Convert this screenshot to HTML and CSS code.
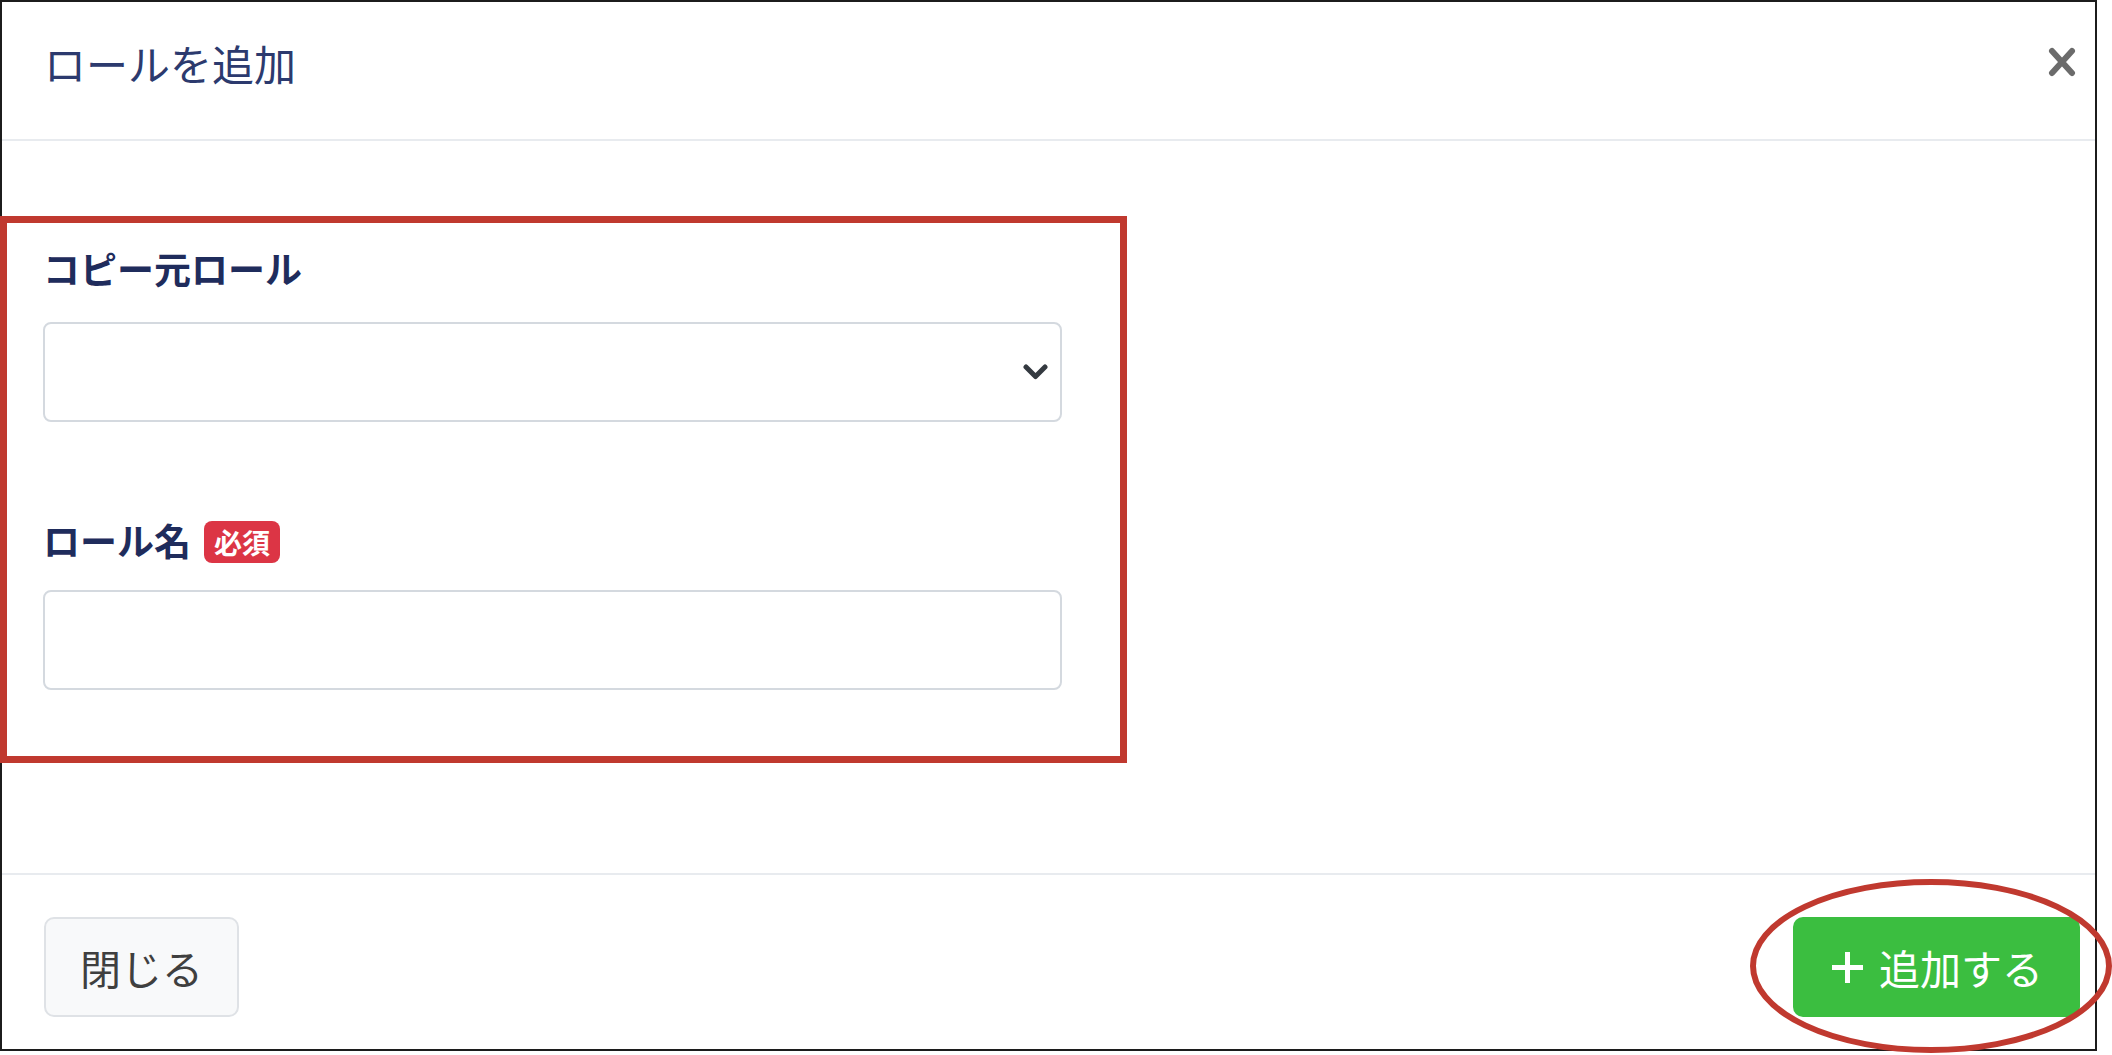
FILE: index.html
```html
<!DOCTYPE html>
<html lang="ja">
<head>
<meta charset="utf-8">
<title>ロールを追加</title>
<link rel="stylesheet" href="styles.css">
</head>
<body>
<div class="page">
  <div class="modal">
    <div class="modal-header">
      <h5 class="modal-title">ロールを追加</h5>
      <button class="close-btn" type="button" aria-label="閉じる">
        <svg width="28" height="30" viewBox="0 0 28 30"><path d="M4 4 L24 26 M24 4 L4 26" stroke="#6b6b6b" stroke-width="6" stroke-linecap="round" fill="none"/></svg>
      </button>
    </div>
    <div class="modal-body">
      <div class="form-group first">
        <label class="form-label">コピー元ロール</label>
        <div class="select">
          <svg class="chevron" width="25" height="17" viewBox="0 0 25 17"><path d="M3 3 L12.5 12.5 L22 3" stroke="#343a40" stroke-width="5" fill="none" stroke-linecap="round" stroke-linejoin="round"/></svg>
        </div>
      </div>
      <div class="form-group">
        <div class="label-row">
          <label class="form-label">ロール名</label>
          <span class="badge">必須</span>
        </div>
        <div class="input"></div>
      </div>
    </div>
    <div class="modal-footer">
      <button class="btn btn-light" type="button">閉じる</button>
      <button class="btn btn-success" type="button">
        <svg width="35" height="35" viewBox="0 0 35 35"><path d="M17.5 2 V33 M2 17.5 H33" stroke="#ffffff" stroke-width="5" fill="none"/></svg>
        <span>追加する</span>
      </button>
    </div>
  </div>
  <div class="annot-rect"></div>
  <svg class="annot-ellipse" width="362" height="176" viewBox="0 0 362 176"><ellipse cx="181" cy="87" rx="178" ry="84" fill="none" stroke="#c0392f" stroke-width="6"/></svg>
</div>
</body>
</html>
```

FILE: styles.css
```css
html, body {
  margin: 0;
  padding: 0;
  background: #ffffff;
}
body {
  font-family: "Noto Sans CJK JP", "Noto Sans", sans-serif;
  overflow: hidden;
}
.page {
  position: relative;
  width: 2112px;
  height: 1055px;
}
.modal {
  width: 2097px;
  height: 1051px;
  box-sizing: border-box;
  border: 2px solid #1c1c1c;
  display: flex;
  flex-direction: column;
  background: #ffffff;
}
.modal-header {
  height: 139px;
  box-sizing: border-box;
  border-bottom: 2px solid #e8ebef;
  display: flex;
  justify-content: space-between;
  align-items: flex-start;
  padding: 31px 19px 0 42px;
}
.modal-title {
  margin: 0;
  font-size: 42px;
  line-height: 60px;
  font-weight: 400;
  color: #2c3a6e;
}
.close-btn {
  margin-top: 14px;
  padding: 0;
  border: 0;
  background: transparent;
  width: 28px;
  height: 30px;
  display: block;
}
.close-btn svg { display: block; }
.modal-body {
  flex: 1;
  padding: 102px 0 0 41px;
}
.form-group.first {
  margin-bottom: 93px;
}
.form-label {
  display: block;
  font-size: 37px;
  line-height: 50px;
  font-weight: 700;
  color: #1f2c5c;
  margin-bottom: 29px;
}
.label-row {
  display: flex;
  align-items: center;
  gap: 13px;
  height: 50px;
  margin-bottom: 25px;
}
.label-row .form-label {
  margin-bottom: 0;
}
.badge {
  display: inline-block;
  height: 42px;
  line-height: 42px;
  padding: 0 10px;
  border-radius: 8px;
  background: #dc3545;
  color: #ffffff;
  font-size: 28px;
  font-weight: 700;
  margin-top: 4px;
}
.select, .input {
  width: 1019px;
  height: 100px;
  box-sizing: border-box;
  border: 2px solid #d4d9df;
  border-radius: 8px;
  background: #ffffff;
}
.select {
  display: flex;
  align-items: center;
  justify-content: flex-end;
  padding-right: 12px;
}
.chevron { display: block; }
.modal-footer {
  border-top: 2px solid #e8ebef;
  display: flex;
  justify-content: space-between;
  align-items: flex-start;
  padding: 42px 15px 32px 42px;
}
.btn {
  height: 100px;
  box-sizing: border-box;
  font-family: "Noto Sans CJK JP", "Noto Sans", sans-serif;
  font-size: 41px;
  line-height: 1;
  border-radius: 10px;
  display: flex;
  align-items: center;
  justify-content: center;
  padding: 0;
  cursor: pointer;
}
.btn-light {
  width: 195px;
  background: #f8f9fa;
  border: 2px solid #dfe2e6;
  color: #3f3f3f;
}
.btn-success {
  width: 287px;
  background: #3bbe40;
  border: 0;
  color: #ffffff;
  gap: 14px;
}
.btn-success svg { display: block; }
.annot-rect {
  position: absolute;
  left: 0;
  top: 216px;
  width: 1127px;
  height: 547px;
  box-sizing: border-box;
  border: 7px solid #c0392f;
  pointer-events: none;
}
.annot-ellipse {
  position: absolute;
  left: 1750px;
  top: 879px;
  pointer-events: none;
}
```
